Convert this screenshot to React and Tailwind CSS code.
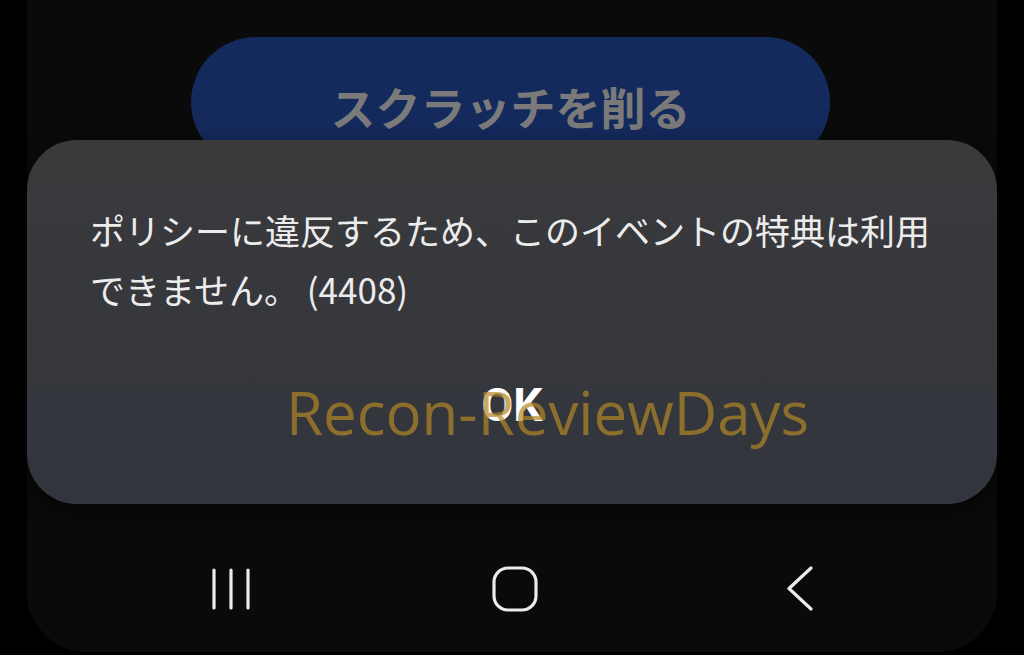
import React from 'react';

const JP = { fontFamily: '"Noto Sans CJK JP", "Noto Sans", sans-serif' };

function NavBar() {
  return (
    <div className="mt-auto h-[126px] pt-[40px]">
      <div className="flex items-center pl-[184px] text-[#ececec]">
        {/* recent apps */}
        <svg width="40" height="44" viewBox="0 0 40 44">
          <g stroke="currentColor" strokeWidth="3.2" strokeLinecap="round">
            <line x1="3" y1="3" x2="3" y2="41" />
            <line x1="20" y1="3" x2="20" y2="41" />
            <line x1="37" y1="3" x2="37" y2="41" />
          </g>
        </svg>
        {/* home */}
        <svg width="46" height="46" viewBox="0 0 46 46" className="ml-[241px]">
          <rect x="2" y="2" width="42" height="42" rx="14" fill="none" stroke="currentColor" strokeWidth="3.2" />
        </svg>
        {/* back */}
        <svg width="30" height="46" viewBox="0 0 30 46" className="ml-[248px]">
          <polyline points="25,2 3,22.5 25,43" fill="none" stroke="currentColor" strokeWidth="3.2" strokeLinecap="round" strokeLinejoin="round" />
        </svg>
      </div>
    </div>
  );
}

export default function App() {
  return (
    <div className="w-[1024px] h-[655px] bg-black overflow-hidden relative">
      <div className="mx-[27px] h-[652px] bg-[#0a0a0a] rounded-b-[60px] flex flex-col relative">
        {/* screen content under the dialog */}
        <div className="pt-[37px] flex justify-center">
          <button
            className="w-[639px] h-[130px] ml-[-3px] rounded-full bg-[#142a5c] text-[#7a7a7a] text-[45px] font-bold pt-[10px]"
            style={JP}
          >
            スクラッチを削る
          </button>
        </div>

        <NavBar />

        {/* dialog */}
        <div className="absolute left-0 right-0 top-[140px] h-[364px] rounded-[50px] bg-gradient-to-b from-[#3a3a3c] to-[#32353d] shadow-[0_6px_20px_rgba(0,0,0,0.6)] px-[63px] pt-[60px] flex flex-col">
          <p className="text-[35px] leading-[59px] text-[#ececec]" style={JP}>
            ポリシーに違反するため、このイベントの特典は利用
            <br />
            できません。 (4408)
          </p>
          <div className="flex justify-center mt-[62px]">
            <span
              className="text-[46px] leading-[50px] font-bold text-white"
              style={{ fontFamily: 'Roboto, "Noto Sans", sans-serif' }}
            >
              OK
            </span>
          </div>
        </div>
      </div>

      {/* watermark */}
      <div
        className="absolute left-[286px] top-[382px] text-[60px] leading-none text-[#b28627]/70 pointer-events-none"
        style={{ fontFamily: '"Open Sans", "Noto Sans", sans-serif' }}
      >
        Recon-ReviewDays
      </div>
    </div>
  );
}
